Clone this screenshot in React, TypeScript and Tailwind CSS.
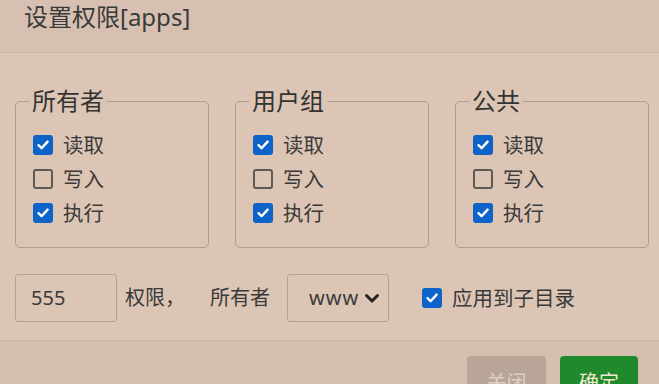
import React from "react";

const FONT = { fontFamily: '"Noto Sans", "Noto Sans CJK SC", sans-serif' };

function Check({ checked }: { checked: boolean }) {
  if (checked) {
    return (
      <span className="flex h-[20px] w-[20px] shrink-0 items-center justify-center rounded-[3px] bg-[#0d63c8]">
        <svg width="14" height="14" viewBox="0 0 14 14">
          <path d="M2.5 7.2 L5.6 10.2 L11.6 3.6" fill="none" stroke="#fff" strokeWidth="2.4" strokeLinecap="round" strokeLinejoin="round" />
        </svg>
      </span>
    );
  }
  return <span className="h-[20px] w-[20px] shrink-0 rounded-[3px] border-2 border-[#5e5954]" />;
}

function Group({ title }: { title: string }) {
  const rows = [
    { label: "读取", checked: true },
    { label: "写入", checked: false },
    { label: "执行", checked: true },
  ];
  return (
    <fieldset className="w-[194px] shrink-0 rounded-[5px] border border-[#a99d94] pl-[13px] pb-[17px]">
      <legend className="px-[3px] text-[24px] leading-[24px] text-[#333]">{title}</legend>
      <div className="ml-[4px] mt-[15px] flex flex-col">
        {rows.map((r) => (
          <div key={r.label} className="flex h-[34px] items-center gap-[10px]">
            <Check checked={r.checked} />
            <span className="text-[20.5px] leading-[24px] text-[#3a3a3a]">{r.label}</span>
          </div>
        ))}
      </div>
    </fieldset>
  );
}

export default function App() {
  return (
    <div style={FONT} className="flex h-[384px] w-[659px] flex-col overflow-hidden bg-[#dcc5b5]">
      <div className="flex h-[53px] shrink-0 items-start border-b border-[#cbb3a3] bg-[#d7c0b1] pl-[24px] pt-[3px]">
        <span className="text-[24px] leading-[28px] text-[#3a3a3a]">设置权限[apps]</span>
      </div>
      <div className="flex h-[287px] shrink-0 flex-col pl-[15px] pt-[36px]">
        <div className="flex gap-[26px]">
          <Group title="所有者" />
          <Group title="用户组" />
          <Group title="公共" />
        </div>
        <div className="mt-[26px] flex items-center text-[20px] text-[#3a3a3a]">
          <div className="flex h-[48px] w-[102px] items-center rounded-[3px] border border-[#aea298] pl-[15px]">555</div>
          <span className="ml-[8px]">权限，</span>
          <span className="ml-[25px]">所有者</span>
          <div className="ml-[17px] flex h-[48px] w-[102px] items-center rounded-[3px] border border-[#aea298] pl-[21px]">
            <span className="tracking-[1px]">www</span>
            <svg className="ml-[5px]" width="16" height="12" viewBox="0 0 16 12">
              <path d="M2.5 3.5 L8 9 L13.5 3.5" fill="none" stroke="#222" strokeWidth="3" strokeLinecap="round" strokeLinejoin="round" />
            </svg>
          </div>
          <div className="ml-[33px] flex items-center gap-[10px]">
            <Check checked={true} />
            <span className="text-[20.5px]">应用到子目录</span>
          </div>
        </div>
      </div>
      <div className="flex flex-1 justify-end gap-[14px] border-t border-[#cdb7a8] bg-[#d4bead] pr-[21px] pt-[15px]">
        <div className="flex h-[50px] w-[79px] items-center justify-center rounded-[4px] bg-[#b9a598] pt-[4px] text-[20px] text-[#dccfc4]">关闭</div>
        <div className="flex h-[50px] w-[78px] items-center justify-center rounded-[4px] bg-[#1f8a2c] pt-[4px] text-[20px] text-[#efe9cf]">确定</div>
      </div>
    </div>
  );
}
